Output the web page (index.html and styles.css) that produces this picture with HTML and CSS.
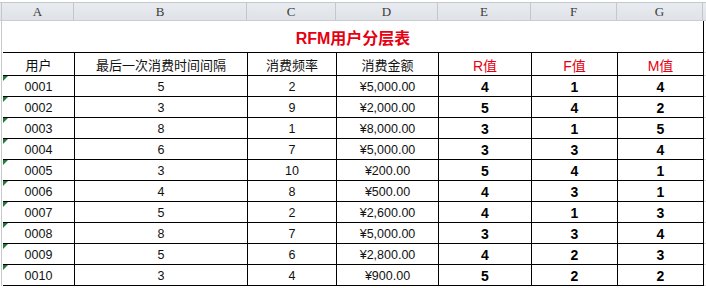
FILE: index.html
```html
<!DOCTYPE html>
<html lang="zh-CN">
<head>
<meta charset="utf-8">
<title>RFM用户分层表</title>
<link rel="stylesheet" href="styles.css">
</head>
<body>
<div class="sheet">
  <div class="band">
    <div class="letter">A</div><div class="letter">B</div><div class="letter">C</div><div class="letter">D</div><div class="letter">E</div><div class="letter">F</div><div class="letter">G</div><div class="letter extra"></div>
  </div>
  <div class="grid">
    <div class="title">RFM用户分层表</div><div class="pad"></div>

    <div class="hd">用户</div><div class="hd">最后一次消费时间间隔</div><div class="hd">消费频率</div><div class="hd">消费金额</div><div class="hd red">R值</div><div class="hd red">F值</div><div class="hd red">M值</div><div class="pad hdpad"></div>

    <div class="c id">0001</div><div class="c">5</div><div class="c">2</div><div class="c">¥5,000.00</div><div class="c b">4</div><div class="c b">1</div><div class="c b">4</div><div class="pad"></div>
    <div class="c id">0002</div><div class="c">3</div><div class="c">9</div><div class="c">¥2,000.00</div><div class="c b">5</div><div class="c b">4</div><div class="c b">2</div><div class="pad"></div>
    <div class="c id">0003</div><div class="c">8</div><div class="c">1</div><div class="c">¥8,000.00</div><div class="c b">3</div><div class="c b">1</div><div class="c b">5</div><div class="pad"></div>
    <div class="c id">0004</div><div class="c">6</div><div class="c">7</div><div class="c">¥5,000.00</div><div class="c b">3</div><div class="c b">3</div><div class="c b">4</div><div class="pad"></div>
    <div class="c id">0005</div><div class="c">3</div><div class="c">10</div><div class="c">¥200.00</div><div class="c b">5</div><div class="c b">4</div><div class="c b">1</div><div class="pad"></div>
    <div class="c id">0006</div><div class="c">4</div><div class="c">8</div><div class="c">¥500.00</div><div class="c b">4</div><div class="c b">3</div><div class="c b">1</div><div class="pad"></div>
    <div class="c id">0007</div><div class="c">5</div><div class="c">2</div><div class="c">¥2,600.00</div><div class="c b">4</div><div class="c b">1</div><div class="c b">3</div><div class="pad"></div>
    <div class="c id">0008</div><div class="c">8</div><div class="c">7</div><div class="c">¥5,000.00</div><div class="c b">3</div><div class="c b">3</div><div class="c b">4</div><div class="pad"></div>
    <div class="c id">0009</div><div class="c">5</div><div class="c">6</div><div class="c">¥2,800.00</div><div class="c b">4</div><div class="c b">2</div><div class="c b">3</div><div class="pad"></div>
    <div class="c id">0010</div><div class="c">3</div><div class="c">4</div><div class="c">¥900.00</div><div class="c b">5</div><div class="c b">2</div><div class="c b">2</div><div class="pad"></div>
  </div>
</div>
</body>
</html>
```
FILE: styles.css
```css
html, body {
  margin: 0;
  padding: 0;
  background: #ffffff;
  width: 706px;
  height: 288px;
  overflow: hidden;
}

.sheet {
  width: 706px;
  padding-top: 2px;
}

.band {
  display: grid;
  grid-template-columns: 2px 72px 173px 89px 102px 93px 86px 86px 1fr;
  height: 19px;
  box-sizing: border-box;
  border-top: 1px solid #c3c8cf;
  border-bottom: 1px solid #c9cdd3;
  background: linear-gradient(#e8ebef, #dfe3e8);
}

.band::before {
  content: "";
  border-right: 1px solid #c3c8cf;
}

.letter {
  box-sizing: border-box;
  border-right: 1px solid #c3c8cf;
  font-family: "Liberation Serif", "DejaVu Serif", serif;
  font-size: 13px;
  color: #3a3a3a;
  text-align: center;
  line-height: 17px;
}

.letter.extra {
  border-right: none;
}

.grid {
  display: grid;
  grid-template-columns: 72px 173px 89px 102px 93px 86px 86px 1fr;
  margin-left: 1px;
  padding-left: 1px;
  border-left: 1px solid #c6c9ce;
  width: 705px;
  box-sizing: border-box;
}

.title {
  grid-column: 1 / 8;
  height: 32px;
  box-sizing: border-box;
  border-right: 1px solid #000;
  border-bottom: 1px solid #000;
  display: flex;
  align-items: center;
  justify-content: center;
  padding-top: 1px;
  font-family: "Liberation Sans", "Noto Sans CJK SC", sans-serif;
  font-weight: bold;
  font-size: 16px;
  color: #e60012;
}

.pad {
  box-sizing: border-box;
  border-bottom: 1px solid #dcdcdc;
}

.hd, .c {
  box-sizing: border-box;
  border-right: 1px solid #000;
  border-bottom: 1px solid #000;
  display: flex;
  align-items: center;
  justify-content: center;
  color: #111;
}

.hd {
  height: 23px;
  font-family: "Noto Sans CJK SC", sans-serif;
  font-size: 13px;
  padding-top: 1px;
}

.hd.red {
  font-family: "Liberation Sans", "Noto Sans CJK SC", sans-serif;
  font-size: 14px;
  color: #e60012;
}

.c {
  height: 21px;
  font-family: "Liberation Sans", "Noto Sans CJK SC", sans-serif;
  font-size: 12.5px;
  padding-top: 1px;
  position: relative;
}

.c.b {
  font-weight: bold;
  font-size: 14px;
  color: #000;
}

.c.id::before {
  content: "";
  position: absolute;
  left: 0;
  top: 0;
  width: 0;
  height: 0;
  border-top: 5px solid #1f7a3a;
  border-right: 5px solid transparent;
}
```
